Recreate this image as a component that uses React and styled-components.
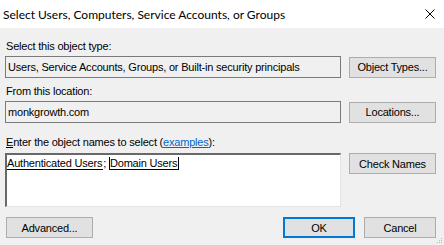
import React from "react";
import styled, { createGlobalStyle } from "styled-components";

const Global = createGlobalStyle`
  html, body {
    margin: 0;
    padding: 0;
    background: #f0f0f0;
  }
  body {
    font-family: "Liberation Sans", Arial, sans-serif;
    font-size: 11px;
    letter-spacing: -0.2px;
    color: #000;
  }
`;

const Window = styled.div`
  position: relative;
  width: 444px;
  height: 245px;
  background: #f0f0f0;
  display: flex;
  flex-direction: column;
  overflow: hidden;
`;

const TitleBar = styled.div`
  height: 28px;
  background: #fff;
  display: flex;
  align-items: center;
  justify-content: space-between;
  padding: 0 4px 0 3px;
  font-family: Lato, "Noto Sans", sans-serif;
  font-size: 12px;
  letter-spacing: 0;
  flex-shrink: 0;
`;

const Close = styled.div`
  width: 16px;
  height: 16px;
  display: flex;
  align-items: center;
  justify-content: center;
  margin-right: 2px;
`;

const Body = styled.div`
  display: flex;
  flex-direction: column;
  padding: 12px 8px 0 5px;
`;

const Label = styled.div`
  height: 13px;
  line-height: 13px;
  padding-left: 1px;
  margin-bottom: ${(p) => p.$gap || 3}px;
  white-space: nowrap;
`;

const Row = styled.div`
  display: flex;
  align-items: ${(p) => (p.$top ? "flex-start" : "center")};
  gap: 8px;
  margin-bottom: ${(p) => p.$mb || 0}px;
`;

const Field = styled.div`
  box-sizing: border-box;
  width: 336px;
  height: 22px;
  border: 1px solid #7a7a7a;
  background: #f0f0f0;
  display: flex;
  align-items: center;
  padding-left: 2px;
  white-space: nowrap;
  overflow: hidden;
`;

const NamesBox = styled.div`
  box-sizing: border-box;
  width: 336px;
  height: 54px;
  background: #fff;
  border-top: 2px solid #696969;
  border-left: 2px solid #696969;
  border-right: 1px solid #e3e3e3;
  border-bottom: 1px solid #e3e3e3;
  padding: 1px 0 0 0;
  line-height: 15px;
  white-space: nowrap;
`;

const Token = styled.span`
  border-bottom: 1px solid #000;
  border-left: ${(p) => (p.$boxed ? "1px solid #000" : "none")};
  border-right: ${(p) => (p.$boxed ? "1px solid #000" : "none")};
  padding: 0 1px 0 0;
`;

const Button = styled.button`
  box-sizing: border-box;
  width: ${(p) => p.$w || 87}px;
  height: 21px;
  margin: 0;
  padding: 0;
  font-family: "Liberation Sans", Arial, sans-serif;
  font-size: 11px;
  letter-spacing: -0.2px;
  color: #000;
  background: #e1e1e1;
  border: ${(p) => (p.$default ? "2px solid #0078d7" : "1px solid #adadad")};
  flex-shrink: 0;
`;

const Link = styled.span`
  color: #0066cc;
  text-decoration: underline;
`;

const Key = styled.span`
  text-decoration: underline;
`;

const Footer = styled.div`
  display: flex;
  align-items: center;
  gap: 9px;
  margin-top: 10px;
  padding-left: 1px;
`;

const Spacer = styled.div`
  flex: 1;
`;

const Grip = styled.svg`
  position: absolute;
  right: 1px;
  bottom: 1px;
`;

export default function App() {
  return (
    <Window>
      <Global />
      <TitleBar>
        <span>Select Users, Computers, Service Accounts, or Groups</span>
        <Close>
          <svg width="10" height="10" viewBox="0 0 10 10">
            <path d="M0.5 0.5 L9.5 9.5 M9.5 0.5 L0.5 9.5" stroke="#000" strokeWidth="1" fill="none" />
          </svg>
        </Close>
      </TitleBar>
      <Body>
        <Label>Select this object type:</Label>
        <Row $mb={7}>
          <Field>Users, Service Accounts, Groups, or Built-in security principals</Field>
          <Button>Object Types...</Button>
        </Row>
        <Label>From this location:</Label>
        <Row $mb={13}>
          <Field>monkgrowth.com</Field>
          <Button>Locations...</Button>
        </Row>
        <Label $gap={4}>
          <Key>E</Key>nter the object names to select (<Link>examples</Link>):
        </Label>
        <Row $top>
          <NamesBox>
            <Token>Authenticated Users</Token>; <Token $boxed>Domain Users</Token>
          </NamesBox>
          <Button>Check Names</Button>
        </Row>
        <Footer>
          <Button>Advanced...</Button>
          <Spacer />
          <Button $w={72} $default>OK</Button>
          <Button $w={72}>Cancel</Button>
        </Footer>
      </Body>
      <Grip width="7" height="7" viewBox="0 0 7 7">
        <rect x="5" y="1" width="1" height="1" fill="#b8b8b8" />
        <rect x="3" y="3" width="1" height="1" fill="#b8b8b8" />
        <rect x="5" y="3" width="1" height="1" fill="#b8b8b8" />
        <rect x="1" y="5" width="1" height="1" fill="#b8b8b8" />
        <rect x="3" y="5" width="1" height="1" fill="#b8b8b8" />
        <rect x="5" y="5" width="1" height="1" fill="#b8b8b8" />
      </Grip>
    </Window>
  );
}
